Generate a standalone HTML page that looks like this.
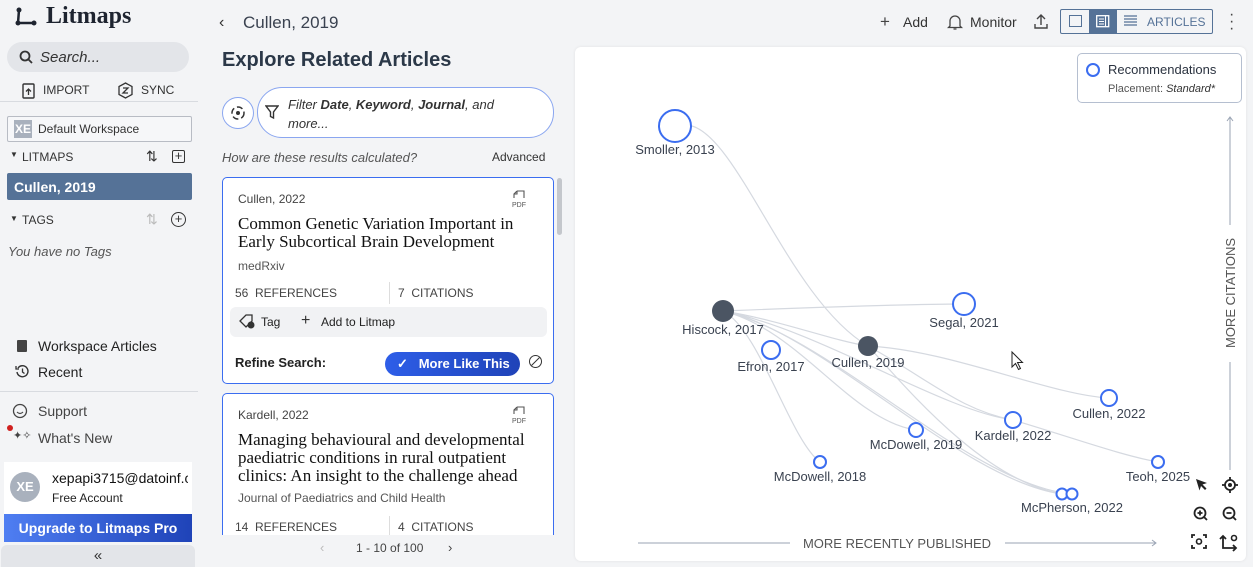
<!DOCTYPE html>
<html><head><meta charset="utf-8">
<style>
*{box-sizing:border-box;margin:0;padding:0}
body{width:1253px;height:565px;overflow:hidden;background:#f3f4f6;font-family:"Liberation Sans",sans-serif;color:#2b3340;position:relative}
.abs{position:absolute}
.side{left:0;top:0;width:198px;height:565px;background:#f3f4f6}
.t{position:absolute;white-space:nowrap}
.card{position:absolute;left:222px;width:332px;background:#fff;border:1px solid #3b6df0;border-radius:5px;overflow:hidden}
.serif{font-family:"Liberation Serif",serif}
</style></head><body>
<!-- sidebar -->
<div class="abs side">
 <svg class="abs" style="left:14px;top:7px" width="26" height="20" viewBox="0 0 26 20"><circle cx="5" cy="3" r="2.5" fill="#1e2430"/><circle cx="4" cy="16" r="2.5" fill="#1e2430"/><circle cx="20" cy="16" r="2.5" fill="#1e2430"/><path d="M5 3 L4 16 L20 16" stroke="#1e2430" stroke-width="2.5" fill="none"/></svg>
 <div class="t serif" style="left:46px;top:3px;font-size:24px;font-weight:bold;color:#1e2430">Litmaps</div>
 <div class="abs" style="left:7px;top:42px;width:182px;height:30px;border-radius:15px;background:#e3e5e9"></div>
 <svg class="abs" style="left:18px;top:49px" width="16" height="16"><circle cx="7" cy="7" r="4.5" stroke="#333" stroke-width="1.8" fill="none"/><path d="M10.5 10.5 L14 14" stroke="#333" stroke-width="1.8"/></svg>
 <div class="t" style="left:40px;top:49px;font-size:15px;font-style:italic;color:#333">Search...</div>
 <svg class="abs" style="left:22px;top:82px" width="14" height="17"><rect x="1" y="2" width="11" height="14" rx="1" stroke="#333" stroke-width="1.4" fill="none"/><path d="M6.5 13V7M4 9.5l2.5-2.5 2.5 2.5" stroke="#333" stroke-width="1.3" fill="none"/></svg>
 <div class="t" style="left:43px;top:83px;font-size:12px;color:#333">IMPORT</div>
 <svg class="abs" style="left:117px;top:82px" width="17" height="17"><path d="M8.5 1 L15 4.5 V12.5 L8.5 16 L2 12.5 V4.5Z" stroke="#333" stroke-width="1.3" fill="none"/><path d="M6 6h5l-5 5h5" stroke="#333" stroke-width="1.3" fill="none"/></svg>
 <div class="t" style="left:141px;top:83px;font-size:12px;color:#333">SYNC</div>
 <div class="abs" style="left:0;top:101px;width:198px;border-top:1px solid #d8dbe0"></div>
 <div class="abs" style="left:7px;top:116px;width:185px;height:26px;border:1px solid #b8bcc4;border-radius:2px;background:#f6f7f9"></div>
 <div class="abs" style="left:14px;top:120px;width:18px;height:18px;background:#a9b1bd;color:#fff;font-size:12px;font-weight:bold;text-align:center;line-height:18px">XE</div>
 <div class="t" style="left:38px;top:122px;font-size:12px;color:#333">Default Workspace</div>
 <div class="t" style="left:10px;top:150px;font-size:8px;color:#333">▼</div>
 <div class="t" style="left:22px;top:150px;font-size:12px;color:#333">LITMAPS</div>
 <div class="t" style="left:146px;top:148px;font-size:14px;color:#333">⇅</div>
 <div class="abs" style="left:172px;top:150px;width:13px;height:13px;border:1.5px solid #333;border-radius:2px;font-size:13px;line-height:10px;text-align:center;color:#333">+</div>
 <div class="abs" style="left:7px;top:173px;width:185px;height:27px;background:#557297;border-radius:2px"></div>
 <div class="t" style="left:14px;top:179px;font-size:14px;font-weight:bold;color:#fff">Cullen, 2019</div>
 <div class="t" style="left:10px;top:214px;font-size:8px;color:#333">▼</div>
 <div class="t" style="left:22px;top:213px;font-size:12px;color:#333">TAGS</div>
 <div class="t" style="left:146px;top:211px;font-size:14px;color:#bbb">⇅</div>
 <div class="abs" style="left:171px;top:212px;width:15px;height:15px;border:1.5px solid #333;border-radius:50%;font-size:13px;line-height:12px;text-align:center;color:#333">+</div>
 <div class="t" style="left:8px;top:244px;font-size:13px;font-style:italic;color:#555">You have no Tags</div>
 <div class="abs" style="left:17px;top:340px;width:10px;height:12px;background:#444;border-radius:1px"></div>
 <div class="t" style="left:38px;top:338px;font-size:14px;color:#222">Workspace Articles</div>
 <svg class="abs" style="left:15px;top:364px" width="15" height="15"><path d="M3 4A5.5 5.5 0 1 1 2 8" stroke="#333" stroke-width="1.4" fill="none"/><path d="M1 2v3h3M7.5 4.5v3.5l2 1.5" stroke="#333" stroke-width="1.3" fill="none"/></svg>
 <div class="t" style="left:38px;top:364px;font-size:14px;color:#222">Recent</div>
 <div class="abs" style="left:0;top:391px;width:198px;border-top:1px solid #d8dbe0"></div>
 <svg class="abs" style="left:12px;top:403px" width="16" height="16"><circle cx="8" cy="8" r="6.5" stroke="#444" stroke-width="1.3" fill="none"/><path d="M5 9q3 3 6 0" stroke="#444" stroke-width="1.2" fill="none"/></svg>
 <div class="t" style="left:38px;top:403px;font-size:14px;color:#444">Support</div>
 <div class="abs" style="left:7px;top:425px;width:6px;height:6px;border-radius:50%;background:#d0201f"></div>
 <div class="t" style="left:13px;top:429px;font-size:11px;color:#444">✦✧</div>
 <div class="t" style="left:38px;top:430px;font-size:14px;color:#444">What's New</div>
 <div class="abs" style="left:4px;top:462px;width:188px;height:52px;background:#fff"></div>
 <div class="abs" style="left:10px;top:472px;width:30px;height:30px;border-radius:50%;background:#a9b1bd;color:#fff;font-size:13px;font-weight:bold;text-align:center;line-height:30px">XE</div>
 <div class="t" style="left:52px;top:470px;font-size:14px;color:#111;width:136px;overflow:hidden">xepapi3715@datoinf.com</div>
 <div class="t" style="left:52px;top:491px;font-size:12px;color:#222">Free Account</div>
 <div class="abs" style="left:4px;top:514px;width:188px;height:28px;background:linear-gradient(90deg,#4f7ef2,#1f43b8);color:#fff;font-size:14px;font-weight:bold;text-align:center;line-height:28px">Upgrade to Litmaps Pro</div>
 <div class="abs" style="left:1px;top:545px;width:194px;height:22px;background:#e3e5e9;border-radius:6px 6px 0 0;text-align:center;font-size:15px;line-height:22px;color:#333">«</div>
</div>
<!-- middle -->
<div class="t" style="left:219px;top:14px;font-size:16px;color:#333">‹</div>
<div class="t" style="left:243px;top:13px;font-size:17px;color:#3a4250">Cullen, 2019</div>
<div class="t" style="left:222px;top:49px;font-size:20px;font-weight:bold;color:#2b3848">Explore Related Articles</div>
<div class="abs" style="left:222px;top:97px;width:32px;height:32px;border:1px solid #8aa6f0;border-radius:50%;background:#fff"></div>
<svg class="abs" style="left:229px;top:104px" width="18" height="18"><circle cx="9" cy="9" r="6" stroke="#333" stroke-width="1.5" fill="none" stroke-dasharray="6 3"/><circle cx="9" cy="9" r="2" fill="#333"/></svg>
<div class="abs" style="left:257px;top:87px;width:297px;height:51px;border:1px solid #8aa6f0;border-radius:25px;background:#fff"></div>
<svg class="abs" style="left:265px;top:105px" width="14" height="15"><path d="M1 1h12l-4.5 6v6l-3-1.5V7Z" stroke="#333" stroke-width="1.4" fill="none"/></svg>
<div class="t" style="left:288px;top:95px;font-size:13px;font-style:italic;color:#333;line-height:19px">Filter <b>Date</b>, <b>Keyword</b>, <b>Journal</b>, and<br>more...</div>
<div class="t" style="left:222px;top:150px;font-size:13px;font-style:italic;color:#555">How are these results calculated?</div>
<div class="t" style="left:492px;top:150px;font-size:12px;color:#333">Advanced</div>
<div class="abs" style="left:557px;top:178px;width:5px;height:57px;background:#c4c7cc;border-radius:3px"></div>
<div class="card" style="top:177px;height:207px">
 <svg class="abs" style="left:288px;top:12px" width="18" height="18"><path d="M6 1h7v7M6 1L3 4v4M3 4h3V1" stroke="#555" stroke-width="1.1" fill="none"/><text x="1" y="17" font-size="7" fill="#555" font-family="Liberation Sans,sans-serif">PDF</text></svg>
 <div class="t" style="left:15px;top:14px;font-size:12px;color:#444">Cullen, 2022</div>
 <div class="t serif" style="left:15px;top:37px;font-size:17px;color:#111;line-height:18px">Common Genetic Variation Important in<br>Early Subcortical Brain Development</div>
 <div class="t" style="left:15px;top:81px;font-size:12px;color:#555">medRxiv</div>
 <div class="t" style="left:12px;top:108px;font-size:12px;color:#444">56&nbsp; REFERENCES</div>
 <div class="abs" style="left:166px;top:104px;height:22px;border-left:1px solid #ddd"></div>
 <div class="t" style="left:175px;top:108px;font-size:12px;color:#444">7&nbsp; CITATIONS</div>
 <div class="abs" style="left:7px;top:129px;width:317px;height:30px;background:#f1f2f4;border-radius:6px"></div>
 <svg class="abs" style="left:16px;top:136px" width="17" height="16"><path d="M1 7l6-6h6v6l-6 6Z" stroke="#333" stroke-width="1.3" fill="none"/><circle cx="12" cy="11" r="3.5" fill="#333"/></svg>
 <div class="t" style="left:38px;top:137px;font-size:12px;color:#222">Tag</div>
 <div class="t" style="left:78px;top:134px;font-size:16px;color:#333">+</div>
 <div class="t" style="left:98px;top:137px;font-size:12px;color:#222">Add to Litmap</div>
 <div class="t" style="left:12px;top:177px;font-size:13px;font-weight:bold;color:#222">Refine Search:</div>
 <div class="abs" style="left:162px;top:174px;width:135px;height:24px;border-radius:12px;background:linear-gradient(90deg,#2e5ee8,#1f43b8);color:#fff;font-size:13px;font-weight:bold;line-height:24px;padding-left:12px">✓&nbsp;&nbsp; More Like This</div>
 <div class="abs" style="left:306px;top:177px;width:13px;height:13px;border:1.3px solid #333;border-radius:50%;overflow:hidden"><div style="width:15px;border-top:1.3px solid #333;transform:rotate(-45deg);margin:5px 0 0 -2px"></div></div>
</div>
<div class="card" style="top:393px;height:142px;border-bottom:none;border-radius:5px 5px 0 0">
 <svg class="abs" style="left:288px;top:12px" width="18" height="18"><path d="M6 1h7v7M6 1L3 4v4M3 4h3V1" stroke="#555" stroke-width="1.1" fill="none"/><text x="1" y="17" font-size="7" fill="#555" font-family="Liberation Sans,sans-serif">PDF</text></svg>
 <div class="t" style="left:15px;top:14px;font-size:12px;color:#444">Kardell, 2022</div>
 <div class="t serif" style="left:15px;top:37px;font-size:17px;color:#111;line-height:18px">Managing behavioural and developmental<br>paediatric conditions in rural outpatient<br>clinics: An insight to the challenge ahead</div>
 <div class="t" style="left:15px;top:97px;font-size:12px;color:#555">Journal of Paediatrics and Child Health</div>
 <div class="t" style="left:12px;top:126px;font-size:12px;color:#444">14&nbsp; REFERENCES</div>
 <div class="abs" style="left:166px;top:122px;height:22px;border-left:1px solid #ddd"></div>
 <div class="t" style="left:175px;top:126px;font-size:12px;color:#444">4&nbsp; CITATIONS</div>
</div>
<div class="t" style="left:320px;top:540px;font-size:13px;color:#bbb">‹</div>
<div class="t" style="left:356px;top:541px;font-size:12px;color:#444">1 - 10 of 100</div>
<div class="t" style="left:448px;top:540px;font-size:13px;color:#444">›</div>
<!-- top bar right -->
<div class="t" style="left:880px;top:12px;font-size:17px;color:#444">+</div>
<div class="t" style="left:903px;top:14px;font-size:14px;color:#333">Add</div>
<svg class="abs" style="left:947px;top:13px" width="16" height="18"><path d="M3 13V8a5 5 0 0 1 10 0v5l1.5 1.5h-13Z M6.5 16h3" stroke="#444" stroke-width="1.3" fill="none"/></svg>
<div class="t" style="left:970px;top:14px;font-size:14px;color:#333">Monitor</div>
<svg class="abs" style="left:1033px;top:13px" width="16" height="17"><path d="M8 12V2M4 6l4-4 4 4M2 11v4h12v-4" stroke="#444" stroke-width="1.4" fill="none"/></svg>
<div class="abs" style="left:1060px;top:9px;width:153px;height:25px;border:1px solid #557297;border-radius:2px;background:#f3f4f6"></div>
<div class="abs" style="left:1069px;top:15px;width:13px;height:12px;border:1.3px solid #557297"></div>
<div class="abs" style="left:1089px;top:10px;width:28px;height:23px;background:#557297"></div>
<svg class="abs" style="left:1096px;top:15px" width="14" height="13"><rect x="0.7" y="0.7" width="12" height="11" stroke="#fff" stroke-width="1.3" fill="none"/><path d="M3 4h5M3 6.5h5M3 9h5M9.5 1v10" stroke="#fff" stroke-width="1.1"/></svg>
<svg class="abs" style="left:1124px;top:15px" width="13" height="12"><path d="M0 1h13M0 4h13M0 7h13M0 10h13" stroke="#557297" stroke-width="1.2"/></svg>
<div class="t" style="left:1147px;top:15px;font-size:12px;color:#557297">ARTICLES</div>
<div class="t" style="left:1229px;top:11px;font-size:16px;color:#444;line-height:7px">·<br>·<br>·</div>
<!-- map panel -->
<div class="abs" style="left:575px;top:47px;width:671px;height:514px;background:#fff;border-radius:6px;box-shadow:0 0 3px rgba(0,0,0,0.08)"></div>
<svg class="abs" style="left:575px;top:47px" width="671" height="514">
 <g transform="translate(-575,-47)" fill="none" stroke="#d5d9e0" stroke-width="1.2">
  <path d="M692 126 C740 140,790 300,868 346"/>
  <path d="M723 311 C800 308,900 304,964 304"/>
  <path d="M723 311 C760 330,790 440,820 462"/>
  <path d="M723 311 C800 330,850 420,916 430"/>
  <path d="M723 311 C820 330,940 410,1013 420"/>
  <path d="M723 311 C820 330,960 480,1062 494"/>
  <path d="M723 311 C830 335,970 485,1072 494"/>
  <path d="M723 311 C780 320,830 340,868 346"/>
  <path d="M868 346 C950 350,1050 395,1109 398"/>
  <path d="M868 346 C930 380,960 410,1013 420"/>
  <path d="M1013 420 C1080 440,1120 455,1158 462"/>
  <path d="M868 346 C900 380,980 480,1062 494"/>
 </g>
 <g transform="translate(-575,-47)" font-family="Liberation Sans,sans-serif" font-size="13" fill="#3a4250" text-anchor="middle">
  <circle cx="675" cy="126" r="16" fill="#fff" stroke="#3b6df0" stroke-width="2"/><text x="675" y="154">Smoller, 2013</text>
  <circle cx="723" cy="311" r="11" fill="#4b5563"/><text x="723" y="334">Hiscock, 2017</text>
  <circle cx="771" cy="350" r="9" fill="#fff" stroke="#3b6df0" stroke-width="2"/><text x="771" y="371">Efron, 2017</text>
  <circle cx="868" cy="346" r="10" fill="#4b5563"/><text x="868" y="367">Cullen, 2019</text>
  <circle cx="964" cy="304" r="11" fill="#fff" stroke="#3b6df0" stroke-width="2"/><text x="964" y="327">Segal, 2021</text>
  <circle cx="1109" cy="398" r="8" fill="#fff" stroke="#3b6df0" stroke-width="2"/><text x="1109" y="418">Cullen, 2022</text>
  <circle cx="1013" cy="420" r="8" fill="#fff" stroke="#3b6df0" stroke-width="2"/><text x="1013" y="440">Kardell, 2022</text>
  <circle cx="916" cy="430" r="7" fill="#fff" stroke="#3b6df0" stroke-width="2"/><text x="916" y="449">McDowell, 2019</text>
  <circle cx="820" cy="462" r="6" fill="#fff" stroke="#3b6df0" stroke-width="2"/><text x="820" y="481">McDowell, 2018</text>
  <circle cx="1158" cy="462" r="6" fill="#fff" stroke="#3b6df0" stroke-width="2"/><text x="1158" y="481">Teoh, 2025</text>
  <circle cx="1062" cy="494" r="5.5" fill="#fff" stroke="#3b6df0" stroke-width="2"/><circle cx="1072" cy="494" r="5.5" fill="#fff" stroke="#3b6df0" stroke-width="2"/><text x="1072" y="512">McPherson, 2022</text>
 </g>
 <g transform="translate(-575,-47)">
  <path d="M638 543H790M1005 543H1155" stroke="#99a3b3" stroke-width="1"/><path d="M1152 540l4 3-4 3" stroke="#99a3b3" fill="none"/>
  <text x="897" y="548" font-family="Liberation Sans,sans-serif" font-size="13" fill="#555" text-anchor="middle">MORE RECENTLY PUBLISHED</text>
  <path d="M1230 118V225M1230 362V470" stroke="#99a3b3" stroke-width="1"/><path d="M1227 121l3-4 3 4" stroke="#99a3b3" fill="none"/>
  <text transform="translate(1235,293) rotate(-90)" font-family="Liberation Sans,sans-serif" font-size="13" fill="#555" text-anchor="middle">MORE CITATIONS</text>
  <path d="M1012 352v15l3.5-3.5 3 6 2-1-3-6h5Z" fill="#fff" stroke="#222" stroke-width="1"/>
  <path d="M1196 479l11 4-4.5 1.5 4 4-1.5 1.5-4-4-1.5 4.5Z" fill="#222"/>
  <circle cx="1230" cy="485" r="5" fill="none" stroke="#222" stroke-width="1.8"/><circle cx="1230" cy="485" r="2" fill="#222"/><path d="M1230 477v3M1230 490v3M1222 485h3M1235 485h3" stroke="#222" stroke-width="1.8"/>
  <circle cx="1200" cy="513" r="5.5" fill="none" stroke="#222" stroke-width="1.8"/><path d="M1204 517l3 3M1197.5 513h5M1200 510.5v5" stroke="#222" stroke-width="1.8"/>
  <circle cx="1229" cy="513" r="5.5" fill="none" stroke="#222" stroke-width="1.8"/><path d="M1233 517l3 3M1226.5 513h5" stroke="#222" stroke-width="1.8"/>
  <path d="M1192 538v-3h3M1206 538v-3h-3M1192 545v3h3M1206 545v3h-3" stroke="#222" stroke-width="1.8" fill="none"/><circle cx="1199" cy="541.5" r="2.5" fill="none" stroke="#222" stroke-width="1.6"/>
  <path d="M1223 536v12h13M1220 539l3-3 3 3M1233 545l3 3-3 3" stroke="#222" stroke-width="1.8" fill="none"/><circle cx="1234" cy="538" r="2.5" fill="none" stroke="#222" stroke-width="1.6"/>
 </g>
</svg>
<div class="abs" style="left:1077px;top:53px;width:165px;height:50px;border:1px solid #b5bfd0;border-radius:5px;background:#fff"></div>
<div class="abs" style="left:1086px;top:63px;width:14px;height:14px;border:2px solid #3b6df0;border-radius:50%"></div>
<div class="t" style="left:1108px;top:62px;font-size:13px;color:#2b3340">Recommendations</div>
<div class="t" style="left:1108px;top:83px;font-size:11px;color:#555">Placement: <i style="color:#333">Standard*</i></div>
</body></html>
